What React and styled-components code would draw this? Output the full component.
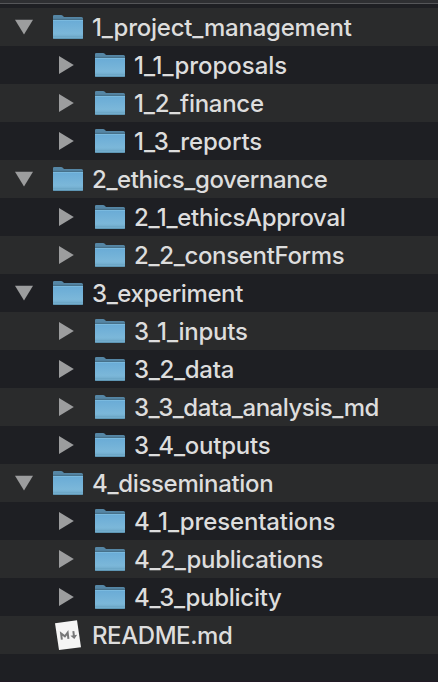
import React from 'react';
import styled, { createGlobalStyle } from 'styled-components';

const GlobalStyle = createGlobalStyle`
  * { box-sizing: border-box; }
  body { margin: 0; background: #1e1f23; }
`;

const Browser = styled.main`
  display: flex;
  flex-direction: column;
  height: 682px;
  overflow: hidden;
  background: #1e1f23;
  border-bottom: 1px solid #211a25;
`;

const HeaderEdge = styled.header`
  flex: none;
  height: 4px;
  margin-bottom: 4px;
  background: #2e2f32;
  border-bottom: 1px solid #555659;
`;

const Tree = styled.ul`
  margin: 0;
  padding: 0;
  list-style: none;
`;

const Row = styled.li`
  display: flex;
  align-items: center;
  height: 38px;
  padding-left: ${({ $level }) => ($level ? 57 : 15)}px;
  &:nth-child(odd) { background: #2a2b2c; }
`;

const Disclosure = styled.span`
  display: flex;
  flex: none;
  width: 38px;
`;

const IconSlot = styled.span`
  display: flex;
  flex: none;
  width: 39px;
`;

const Name = styled.span`
  padding-top: 2px;
  color: #dddddd;
  font: 450 24px/38px Inter, "Liberation Sans", sans-serif;
  letter-spacing: ${({ $tracking }) => $tracking}px;
  white-space: pre;
`;

const Arrow = ({ open }) => (
  <svg width="20" height="20" viewBox="0 0 20 20" fill="#9c9d9e">
    {open ? <path d="M0 2.8H18L9 17.6Z" /> : <path d="M2 1V19L16.8 10Z" />}
  </svg>
);

const Folder = () => (
  <svg width="30" height="26" viewBox="0 0 30 26">
    <defs>
      <linearGradient id="folder-front" x1="0" y1="0" x2="0" y2="1">
        <stop offset="0" stopColor="#69abd6" />
        <stop offset="0.7" stopColor="#7bb7d9" />
        <stop offset="1" stopColor="#70a9c8" />
      </linearGradient>
    </defs>
    <path d="M0 6V2Q0 1 1.3 1H8Q9.3 1 10 2L11 3H28.5Q30 3 30 4.5V7H0Z" fill="#5586a5" />
    <path d="M0 4.8H30V6H0Z" fill="#426b83" />
    <path d="M0 6H30V24Q30 25 29 25H1Q0 25 0 24Z" fill="url(#folder-front)" />
    <path d="M0 6.4H30" stroke="#82c0e3" strokeWidth="0.8" />
    <path d="M0 22.3H30" stroke="#67a0bf" strokeWidth="0.6" />
    <path d="M0.6 24.5H29.4" stroke="#5990ae" strokeWidth="0.8" />
  </svg>
);

const Markdown = () => (
  <svg width="30" height="32" viewBox="0 0 30 32">
    <path d="M2 4.2L24 1.2L28 28.2L6 31.1Z" fill="#f5f5f5" />
    <g transform="translate(15 16.4) rotate(-7)" stroke="#777879" fill="none">
      <path d="M-6.6 3.4V-2.8L-3.2 .6L0 -2.8V3.4" strokeWidth="2" />
      <path d="M5.8 -3.6V2" strokeWidth="2" />
      <path d="M2.4 .6H9.2L5.8 4.4Z" fill="#777879" stroke="none" />
    </g>
  </svg>
);

const entries = [
  { name: '1_project_management', tracking: -0.23 },
  { name: '1_1_proposals', level: 1, tracking: -0.04 },
  { name: '1_2_finance', level: 1, tracking: -0.28 },
  { name: '1_3_reports', level: 1, tracking: -0.18 },
  { name: '2_ethics_governance', tracking: -0.4 },
  { name: '2_1_ethicsApproval', level: 1, tracking: -0.3 },
  { name: '2_2_consentForms', level: 1, tracking: -0.34 },
  { name: '3_experiment', tracking: -0.4 },
  { name: '3_1_inputs', level: 1, tracking: -0.24 },
  { name: '3_2_data', level: 1, tracking: -0.31 },
  { name: '3_3_data_analysis_md', level: 1, tracking: -0.47 },
  { name: '3_4_outputs', level: 1, tracking: -0.22 },
  { name: '4_dissemination', tracking: -0.33 },
  { name: '4_1_presentations', level: 1, tracking: -0.13 },
  { name: '4_2_publications', level: 1, tracking: -0.27 },
  { name: '4_3_publicity', level: 1, tracking: -0.29 },
  { name: 'README.md', file: true, tracking: -0.43 },
];

export default function App() {
  return (
    <>
      <GlobalStyle />
      <Browser>
        <HeaderEdge />
        <Tree>
          {entries.map(({ name, level = 0, file, tracking }) => (
            <Row key={name} $level={level}>
              <Disclosure>{!file && <Arrow open={level === 0} />}</Disclosure>
              <IconSlot>{file ? <Markdown /> : <Folder />}</IconSlot>
              <Name $tracking={tracking}>{name}</Name>
            </Row>
          ))}
        </Tree>
      </Browser>
    </>
  );
}
